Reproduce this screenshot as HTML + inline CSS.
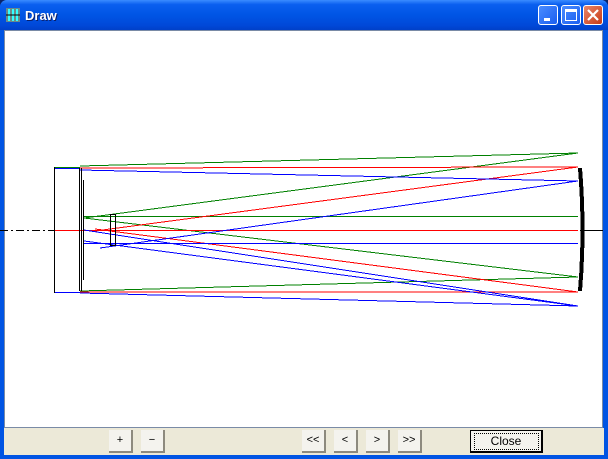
<!DOCTYPE html>
<html><head><style>
body{margin:0;width:608px;height:459px;overflow:hidden;background:#0a246a;font-family:"Liberation Sans",sans-serif}
.win{position:absolute;left:0;top:0;width:608px;height:459px;background:#0054e3;border-radius:7px 7px 0 0}
.title{position:absolute;left:0;top:0;width:608px;height:30px;border-radius:7px 7px 0 0;background:linear-gradient(#3a8cff 0%,#0a5fef 15%,#0055e5 50%,#0048d8 85%,#0040c8 100%)}
.ttext{position:absolute;left:25px;top:8px;color:#fff;font-weight:bold;font-size:13px;text-shadow:1px 1px #0a1f6a}
.tb{position:absolute;top:5px;width:20px;height:20px;border:1px solid #fff;border-radius:3px;box-sizing:border-box;background:linear-gradient(135deg,#4b8dff,#1a5ef0)}
.content{position:absolute;left:4px;top:30px;width:599px;height:398px;background:#fff;border:1px solid #7a8ba6;box-sizing:border-box}
.bar{position:absolute;left:4px;top:428px;width:600px;height:27px;background:#ece9d8}
.btn{position:absolute;top:430px;height:23px;background:#f4f3ee;border-right:2px solid #8d8a7e;border-bottom:2px solid #8d8a7e;box-sizing:border-box;font-size:11px;text-align:center;line-height:21px;color:#000}
</style></head><body>
<div class="win">
<div class="title">
<svg style="position:absolute;left:6px;top:8px" width="14" height="14"><rect width="14" height="14" fill="#6a8a8a"/><rect x="2" y="1" width="2" height="12" fill="#3ff"/><rect x="6" y="1" width="2" height="12" fill="#3ff"/><rect x="10" y="1" width="2" height="12" fill="#3ff"/><line x1="0" y1="7" x2="14" y2="7" stroke="#000"/></svg>
<div class="ttext">Draw</div>
<div class="tb" style="left:538px"><div style="position:absolute;left:5px;top:12px;width:6px;height:3px;background:#fff"></div></div>
<div class="tb" style="left:561px"><div style="position:absolute;left:3px;top:3px;width:12px;height:12px;border:1px solid #fff;border-top-width:3px;box-sizing:border-box"></div></div>
<div class="tb" style="left:583px;background:linear-gradient(135deg,#e8866a,#c83a15)"><svg width="18" height="18"><path d="M4 4L14 14M14 4L4 14" stroke="#fff" stroke-width="2.2"/></svg></div>
</div>
<div class="content"></div>
<svg style="position:absolute;left:0;top:0" width="608" height="459" shape-rendering="crispEdges">
<line x1="0" y1="230.5" x2="54" y2="230.5" stroke="#000" stroke-dasharray="8,3,2,3"/>
<line x1="580" y1="230.5" x2="603" y2="230.5" stroke="#000"/>
<g fill="none" stroke-width="1">
<path d="M54 167.5H80M80 166L578 153M578 153L84 218M84 216.5H578M578 277L84 218M80 291L578 277" stroke="#008000"/>
<path d="M80 168L578 167M578 167L95 231M54 230.5H578M95 229L578 292M80 292L578 292" stroke="#f00"/>
<path d="M54 168.5H80M80 170L578 181M578 181L100 248M84 241L578 306M84 243.5H578M54 292.5H80M80 293L578 306M578 306L84 230" stroke="#00f"/>
</g>
<line x1="54.5" y1="167" x2="54.5" y2="293" stroke="#000"/>
<line x1="79.5" y1="168" x2="79.5" y2="291" stroke="#000"/>
<line x1="81.5" y1="168" x2="81.5" y2="291" stroke="#000"/>
<line x1="83.5" y1="180" x2="83.5" y2="280" stroke="#000"/>
<rect x="110.5" y="214.5" width="5" height="31" fill="none" stroke="#000"/>
<path d="M580 168Q585 230 580 291" stroke="#000" stroke-width="4" fill="none"/>
</svg>
<div class="bar"></div>
<div class="btn" style="left:109px;width:24px">+</div>
<div class="btn" style="left:141px;width:24px">−</div>
<div class="btn" style="left:302px;width:24px">&lt;&lt;</div>
<div class="btn" style="left:334px;width:24px">&lt;</div>
<div class="btn" style="left:366px;width:24px">&gt;</div>
<div class="btn" style="left:398px;width:24px">&gt;&gt;</div>
<div class="btn" style="left:470px;width:73px;border:1px solid #000;border-right:2px solid #000;border-bottom:2px solid #000;font-size:12px"><span style="display:inline-block;outline:1px dotted #000;width:63px;line-height:15px;margin-top:2px">Close</span></div>
</div>
</body></html>
